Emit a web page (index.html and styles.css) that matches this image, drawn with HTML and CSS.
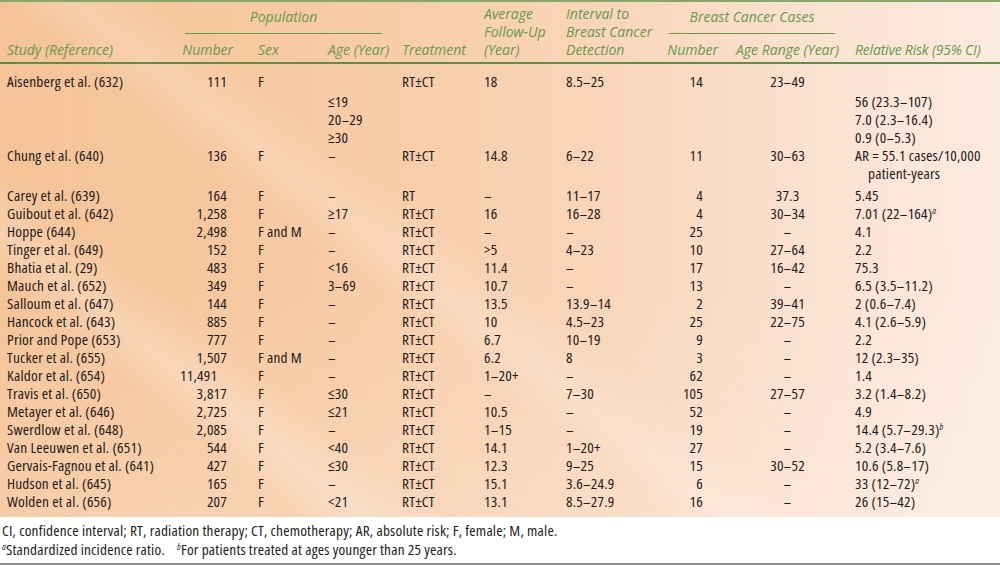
FILE: index.html
```html
<!DOCTYPE html>
<html lang="en">
<head>
<meta charset="utf-8">
<title>Breast cancer after Hodgkin lymphoma</title>
<link rel="stylesheet" href="styles.css">
</head>
<body>
<div class="sheet">
  <div class="panel">
    <table class="data">
      <colgroup>
        <col class="w-study"><col class="w-num"><col class="w-sex"><col class="w-age"><col class="w-treat">
        <col class="w-fu"><col class="w-int"><col class="w-bcn"><col class="w-range"><col class="w-rr">
      </colgroup>
      <thead>
        <tr class="h1">
          <th rowspan="2" class="study">Study (Reference)</th>
          <th colspan="3" class="group pop"><div class="group-label">Population</div></th>
          <th rowspan="2">Treatment</th>
          <th rowspan="2"><span class="hl">Average</span><span class="hl">Follow-Up</span><span class="hl">(Year)</span></th>
          <th rowspan="2"><span class="hl">Interval to</span><span class="hl">Breast Cancer</span><span class="hl">Detection</span></th>
          <th colspan="2" class="group bcc"><div class="group-label">Breast Cancer Cases</div></th>
          <th rowspan="2" class="rr">Relative Risk (95% CI)</th>
        </tr>
        <tr class="h2">
          <th class="num">Number</th>
          <th>Sex</th>
          <th>Age (Year)</th>
          <th class="bcn">Number</th>
          <th class="range">Age Range (Year)</th>
        </tr>
      </thead>
      <tbody>
        <tr class="first"><td class="study">Aisenberg et al. (632)</td><td class="num">111</td><td>F</td><td></td><td>RT±CT</td><td>18</td><td>8.5–25</td><td class="bcn">14</td><td class="range">23–49</td><td class="rr"></td></tr>
        <tr class="gap-s"><td class="study"></td><td class="num"></td><td></td><td>≤19</td><td></td><td></td><td></td><td class="bcn"></td><td class="range"></td><td class="rr">56 (23.3–107)</td></tr>
        <tr><td class="study"></td><td class="num"></td><td></td><td>20–29</td><td></td><td></td><td></td><td class="bcn"></td><td class="range"></td><td class="rr">7.0 (2.3–16.4)</td></tr>
        <tr><td class="study"></td><td class="num"></td><td></td><td>≥30</td><td></td><td></td><td></td><td class="bcn"></td><td class="range"></td><td class="rr">0.9 (0–5.3)</td></tr>
        <tr><td class="study">Chung et al. (640)</td><td class="num">136</td><td>F</td><td>–</td><td>RT±CT</td><td>14.8</td><td>6–22</td><td class="bcn">11</td><td class="range">30–63</td><td class="rr">AR = 55.1 cases/10,000<span class="cont">patient-years</span></td></tr>
        <tr class="gap"><td class="study">Carey et al. (639)</td><td class="num">164</td><td>F</td><td>–</td><td>RT</td><td>–</td><td>11–17</td><td class="bcn">4</td><td class="range">37.3</td><td class="rr">5.45</td></tr>
        <tr><td class="study">Guibout et al. (642)</td><td class="num">1,258</td><td>F</td><td>≥17</td><td>RT±CT</td><td>16</td><td>16–28</td><td class="bcn">4</td><td class="range">30–34</td><td class="rr">7.01 (22–164)<sup>a</sup></td></tr>
        <tr><td class="study">Hoppe (644)</td><td class="num">2,498</td><td>F and M</td><td>–</td><td>RT±CT</td><td>–</td><td>–</td><td class="bcn">25</td><td class="range">–</td><td class="rr">4.1</td></tr>
        <tr><td class="study">Tinger et al. (649)</td><td class="num">152</td><td>F</td><td>–</td><td>RT±CT</td><td>&gt;5</td><td>4–23</td><td class="bcn">10</td><td class="range">27–64</td><td class="rr">2.2</td></tr>
        <tr><td class="study">Bhatia et al. (29)</td><td class="num">483</td><td>F</td><td>&lt;16</td><td>RT±CT</td><td>11.4</td><td>–</td><td class="bcn">17</td><td class="range">16–42</td><td class="rr">75.3</td></tr>
        <tr><td class="study">Mauch et al. (652)</td><td class="num">349</td><td>F</td><td>3–69</td><td>RT±CT</td><td>10.7</td><td>–</td><td class="bcn">13</td><td class="range">–</td><td class="rr">6.5 (3.5–11.2)</td></tr>
        <tr><td class="study">Salloum et al. (647)</td><td class="num">144</td><td>F</td><td>–</td><td>RT±CT</td><td>13.5</td><td>13.9–14</td><td class="bcn">2</td><td class="range">39–41</td><td class="rr">2 (0.6–7.4)</td></tr>
        <tr><td class="study">Hancock et al. (643)</td><td class="num">885</td><td>F</td><td>–</td><td>RT±CT</td><td>10</td><td>4.5–23</td><td class="bcn">25</td><td class="range">22–75</td><td class="rr">4.1 (2.6–5.9)</td></tr>
        <tr><td class="study">Prior and Pope (653)</td><td class="num">777</td><td>F</td><td>–</td><td>RT±CT</td><td>6.7</td><td>10–19</td><td class="bcn">9</td><td class="range">–</td><td class="rr">2.2</td></tr>
        <tr><td class="study">Tucker et al. (655)</td><td class="num">1,507</td><td>F and M</td><td>–</td><td>RT±CT</td><td>6.2</td><td>8</td><td class="bcn">3</td><td class="range">–</td><td class="rr">12 (2.3–35)</td></tr>
        <tr><td class="study">Kaldor et al. (654)</td><td class="num num-off">11,491</td><td>F</td><td>–</td><td>RT±CT</td><td>1–20+</td><td>–</td><td class="bcn">62</td><td class="range">–</td><td class="rr">1.4</td></tr>
        <tr><td class="study">Travis et al. (650)</td><td class="num">3,817</td><td>F</td><td>≤30</td><td>RT±CT</td><td>–</td><td>7–30</td><td class="bcn">105</td><td class="range">27–57</td><td class="rr">3.2 (1.4–8.2)</td></tr>
        <tr><td class="study">Metayer et al. (646)</td><td class="num">2,725</td><td>F</td><td>≤21</td><td>RT±CT</td><td>10.5</td><td>–</td><td class="bcn">52</td><td class="range">–</td><td class="rr">4.9</td></tr>
        <tr><td class="study">Swerdlow et al. (648)</td><td class="num">2,085</td><td>F</td><td>–</td><td>RT±CT</td><td>1–15</td><td>–</td><td class="bcn">19</td><td class="range">–</td><td class="rr">14.4 (5.7–29.3)<sup>b</sup></td></tr>
        <tr><td class="study">Van Leeuwen et al. (651)</td><td class="num">544</td><td>F</td><td>&lt;40</td><td>RT±CT</td><td>14.1</td><td>1–20+</td><td class="bcn">27</td><td class="range">–</td><td class="rr">5.2 (3.4–7.6)</td></tr>
        <tr><td class="study">Gervais-Fagnou et al. (641)</td><td class="num">427</td><td>F</td><td>≤30</td><td>RT±CT</td><td>12.3</td><td>9–25</td><td class="bcn">15</td><td class="range">30–52</td><td class="rr">10.6 (5.8–17)</td></tr>
        <tr><td class="study">Hudson et al. (645)</td><td class="num">165</td><td>F</td><td>–</td><td>RT±CT</td><td>15.1</td><td>3.6–24.9</td><td class="bcn">6</td><td class="range">–</td><td class="rr">33 (12–72)<sup>a</sup></td></tr>
        <tr class="last"><td class="study">Wolden et al. (656)</td><td class="num">207</td><td>F</td><td>&lt;21</td><td>RT±CT</td><td>13.1</td><td>8.5–27.9</td><td class="bcn">16</td><td class="range">–</td><td class="rr">26 (15–42)</td></tr>
      </tbody>
    </table>
  </div>
  <div class="notes">
    <p>CI, confidence interval; RT, radiation therapy; CT, chemotherapy; AR, absolute risk; F, female; M, male.</p>
    <p><sup>a</sup>Standardized incidence ratio.<span class="sep"></span><sup>b</sup>For patients treated at ages younger than 25 years.</p>
  </div>
</div>
</body>
</html>
```

FILE: styles.css
```css
html, body {
  margin: 0;
  padding: 0;
  background: #ffffff;
}

body {
  font-family: "Open Sans", "Liberation Sans", sans-serif;
  font-stretch: 75%;
  color: #1e1b1b;
  width: 1000px;
  height: 565px;
  overflow: hidden;
}

.sheet {
  width: 1000px;
  height: 565px;
  display: flex;
  flex-direction: column;
  border-bottom: 2px solid #8c8c8c;
  box-sizing: border-box;
}

.panel {
  border-top: 2px solid #84a96b;
  background:
    linear-gradient(38deg, rgba(255,255,255,0) 18%, rgba(255,255,255,0.22) 22%, rgba(255,255,255,0) 27%),
    linear-gradient(38deg, rgba(255,255,255,0) 40%, rgba(255,255,255,0.18) 44%, rgba(255,255,255,0) 49%),
    linear-gradient(180deg, rgba(255,255,255,0) 55%, rgba(255,255,255,0.18) 100%),
    linear-gradient(90deg, #f5c397 0%, #f7caa3 30%, #f9d5b9 60%, #fbe2d1 82%, #fcebe0 100%);
}

.data {
  width: 1000px;
  table-layout: fixed;
  border-collapse: separate;
  border-spacing: 0;
  font-size: 15.3px;
  font-weight: 500;
}

.w-study { width: 180px; }
.w-num { width: 78px; }
.w-sex { width: 70px; }
.w-age { width: 74px; }
.w-treat { width: 82px; }
.w-fu { width: 82px; }
.w-int { width: 94px; }
.w-bcn { width: 70px; }
.w-range { width: 115px; }
.w-rr { width: 155px; }

/* header */
.data th {
  font-weight: 500;
  font-style: italic;
  font-size: 14px;
  font-stretch: 90%;
  line-height: 18px;
  color: #669a4b;
  text-align: left;
  vertical-align: bottom;
  padding: 0 0 3px 0;
  white-space: nowrap;
}

.hl {
  display: block;
  height: 18px;
}

.data thead th[rowspan],
.data .h2 th {
  border-bottom: 2px solid #5c9046;
}

.data .h2 th {
  padding-top: 7px;
}

.data th.group {
  vertical-align: top;
  padding: 6px 0 0 0;
  text-align: center;
}

.data th.pop { padding-left: 5px; padding-right: 20px; }
.data th.bcc { padding-left: 9px; padding-right: 10px; }

.group-label {
  padding-bottom: 7px;
  border-bottom: 1px solid #669a4b;
}

.data th.study { padding-left: 7px; }
.data th.num { text-align: right; padding-right: 25px; }
.data th.bcn { text-align: right; padding-right: 12px; }
.data th.range { text-align: center; }
.data th.rr { padding-left: 10px; letter-spacing: -0.2px; }

/* body */
.data td {
  padding: 0;
  line-height: 18px;
  letter-spacing: 0.2px;
  vertical-align: top;
  white-space: nowrap;
}

.data tr.first td { padding-top: 8px; }
.data tr.gap-s td { padding-top: 2px; }
.data tr.gap td { padding-top: 4px; }
.data tr.last td { padding-bottom: 7px; }

.data td.study { padding-left: 7px; }
.data td.num { text-align: right; padding-right: 31px; }
.data td.num-off { padding-right: 50px; }
.data td.bcn { text-align: right; padding-right: 27px; }
.data td.range { text-align: center; }
.data td.rr { padding-left: 10px; }

.cont {
  display: block;
  padding-left: 13px;
}

sup {
  font-style: italic;
  font-size: 9px;
  line-height: 0;
  vertical-align: 5px;
}

/* notes */
.notes {
  flex: 1;
  background: #ffffff;
  padding: 4px 0 0 2px;
  font-size: 15.3px;
  letter-spacing: 0.2px;
  line-height: 19px;
  font-weight: 500;
}

.notes p {
  margin: 0;
  white-space: nowrap;
}

.sep {
  display: inline-block;
  width: 12px;
}
```
